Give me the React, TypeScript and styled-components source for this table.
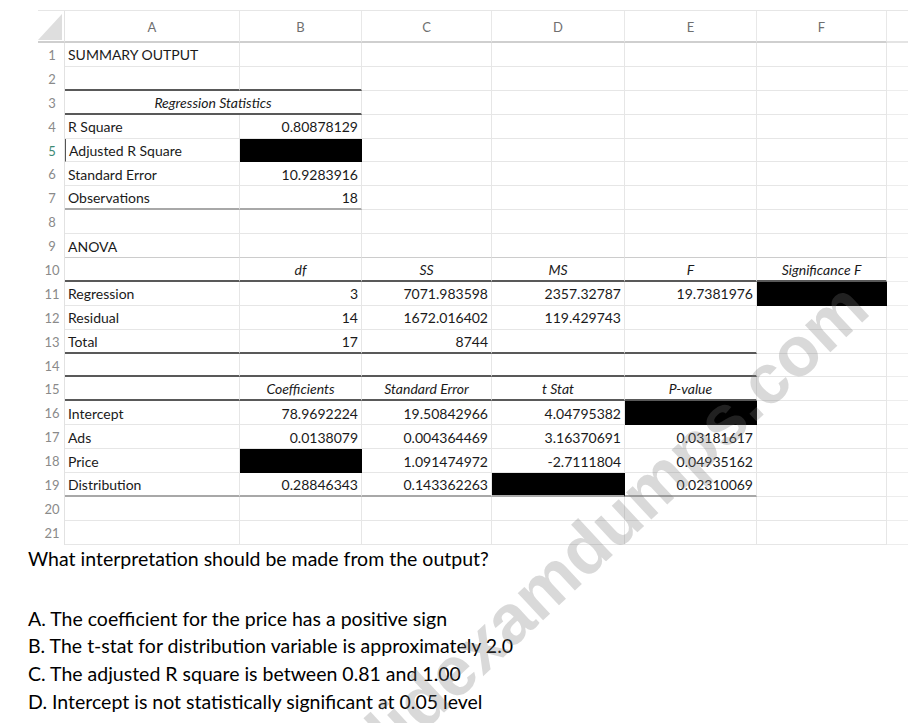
import React from 'react';
import styled, { createGlobalStyle } from 'styled-components';

type Align = 'left' | 'right' | 'center';
type Edge = 'dark' | 'mid' | 'soft';

interface CellData {
  t?: string;
  a?: Align;
  i?: boolean;
  span?: number;
  b?: Edge;
  black?: boolean;
  sel?: boolean;
}

const L = (t: string, b?: Edge): CellData => ({ t, a: 'left', b });
const R = (t: string, b?: Edge): CellData => ({ t, a: 'right', b });
const H = (t: string, b?: Edge): CellData => ({ t, a: 'center', i: true, b });
const E = (b?: Edge): CellData => ({ b });
const X = (b?: Edge): CellData => ({ black: true, b });

// columns A..F for each of the 21 rows
const rows: CellData[][] = [
  [L('SUMMARY OUTPUT'), E(), E(), E(), E(), E()],
  [E('dark'), E('dark'), E(), E(), E(), E()],
  [{ t: 'Regression Statistics', a: 'center', i: true, span: 2, b: 'dark' }, E(), E(), E(), E()],
  [L('R Square'), R('0.80878129'), E(), E(), E(), E()],
  [{ t: 'Adjusted R Square', a: 'left', sel: true }, X(), E(), E(), E(), E()],
  [L('Standard Error'), R('10.9283916'), E(), E(), E(), E()],
  [L('Observations', 'mid'), R('18', 'mid'), E(), E(), E(), E()],
  [E(), E(), E(), E(), E(), E()],
  [L('ANOVA', 'soft'), E('soft'), E('soft'), E('soft'), E('soft'), E('soft')],
  [E('dark'), H('df', 'dark'), H('SS', 'dark'), H('MS', 'dark'), H('F', 'dark'), H('Significance F', 'dark')],
  [L('Regression'), R('3'), R('7071.983598'), R('2357.32787'), R('19.7381976'), X()],
  [L('Residual'), R('14'), R('1672.016402'), R('119.429743'), E(), E()],
  [L('Total', 'dark'), R('17', 'dark'), R('8744', 'dark'), E('dark'), E('dark'), E()],
  [E('dark'), E('dark'), E('dark'), E('dark'), E('dark'), E()],
  [E('dark'), H('Coefficients', 'dark'), H('Standard Error', 'dark'), H('t Stat', 'dark'), H('P-value', 'dark'), E()],
  [L('Intercept'), R('78.9692224'), R('19.50842966'), R('4.04795382'), X(), E()],
  [L('Ads'), R('0.0138079'), R('0.004364469'), R('3.16370691'), R('0.03181617'), E()],
  [L('Price'), X(), R('1.091474972'), R('-2.7111804'), R('0.04935162'), E()],
  [L('Distribution', 'mid'), R('0.28846343', 'mid'), R('0.143362263', 'mid'), X('mid'), R('0.02310069', 'mid'), E()],
  [E(), E(), E(), E(), E(), E()],
  [E(), E(), E(), E(), E(), E()],
];

const letters = ['A', 'B', 'C', 'D', 'E', 'F'];

const options = [
  'A. The coefficient for the price has a positive sign',
  'B. The t-stat for distribution variable is approximately 2.0',
  'C. The adjusted R square is between 0.81 and 1.00',
  'D. Intercept is not statistically significant at 0.05 level',
];

const App: React.FC = () => {
  return (
    <Page>
      <GlobalStyle />
      <Sheet>
        <Corner>
          <CornerMark />
        </Corner>
        {letters.map((l) => (
          <ColHead key={l}>{l}</ColHead>
        ))}
        <ColHead $tail />
        {rows.map((row, r) => (
          <React.Fragment key={r}>
            <RowNum $sel={r === 4}>{r + 1}</RowNum>
            {row.map((c, k) => (
              <Cell
                key={k}
                $align={c.a}
                $italic={c.i}
                $span={c.span}
                $edge={c.b}
                $black={c.black}
                $sel={c.sel}
              >
                {c.t}
              </Cell>
            ))}
            <Tail />
          </React.Fragment>
        ))}
      </Sheet>

      <Question>What interpretation should be made from the output?</Question>
      <Options>
        {options.map((o) => (
          <li key={o}>{o}</li>
        ))}
      </Options>

      <Watermark aria-hidden="true">validexamdumps.com</Watermark>
    </Page>
  );
};

export default App;

const GlobalStyle = createGlobalStyle`
  html, body {
    margin: 0;
    padding: 0;
    background: #ffffff;
    overflow: hidden;
  }
`;

const Page = styled.div`
  position: relative;
  height: 723px;
  overflow: hidden;
  background: #fff;
  font-family: Lato, "Open Sans", sans-serif;
  color: #111;
`;

const Sheet = styled.div`
  display: grid;
  grid-template-columns: 27px 175px 122px 130px 133px 132px 130px 21px;
  grid-template-rows: 32px;
  grid-auto-rows: 23.9px;
  margin: 10px 0 0 38px;
  width: 870px;
  border-top: 1px solid #e6e6e6;
  font-size: 14px;
`;

const Corner = styled.div`
  position: relative;
  box-sizing: border-box;
  border-bottom: 2px solid #cfcfcf;
  border-right: 1px solid #e2e2e2;
`;

const CornerMark = styled.div`
  position: absolute;
  right: 2px;
  bottom: 1px;
  width: 24px;
  height: 26px;
  background: #dedede;
  clip-path: polygon(100% 0, 100% 100%, 0 100%);
`;

const ColHead = styled.div<{ $tail?: boolean }>`
  box-sizing: border-box;
  display: flex;
  align-items: center;
  justify-content: center;
  border-bottom: 2px solid ${(p) => (p.$tail ? '#e4e4e4' : '#cfcfcf')};
  border-right: ${(p) => (p.$tail ? 'none' : '1px solid #e8e8e8')};
  color: #6f6f6f;
  font-size: 13px;
  padding-top: 2px;
`;

const RowNum = styled.div<{ $sel?: boolean }>`
  box-sizing: border-box;
  display: flex;
  align-items: center;
  justify-content: center;
  border-right: 1px solid #e2e2e2;
  color: ${(p) => (p.$sel ? '#3e8a74' : '#8a8a8a')};
  font-size: 13px;
  padding-left: 2px;
`;

const edges: Record<Edge | 'grid', string> = {
  dark: '2px solid #595959',
  mid: '2px solid #a8a8a8',
  soft: '1px solid #cccccc',
  grid: '1px solid #e6e6e6',
};

const Cell = styled.div<{
  $align?: Align;
  $italic?: boolean;
  $span?: number;
  $edge?: Edge;
  $black?: boolean;
  $sel?: boolean;
}>`
  box-sizing: border-box;
  grid-column: span ${(p) => p.$span ?? 1};
  display: flex;
  align-items: center;
  justify-content: ${(p) =>
    p.$align === 'right' ? 'flex-end' : p.$align === 'center' ? 'center' : 'flex-start'};
  padding: 1px 3px 0 3px;
  white-space: nowrap;
  font-style: ${(p) => (p.$italic ? 'italic' : 'normal')};
  background: ${(p) => (p.$black ? '#000' : 'transparent')};
  border-right: 1px solid ${(p) => (p.$black ? '#000' : '#e6e6e6')};
  border-bottom: ${(p) => (p.$black && !p.$edge ? '1px solid #000' : edges[p.$edge ?? 'grid'])};
  border-left: ${(p) => (p.$sel ? '1px solid #555' : 'none')};
  color: #1a1a1a;
`;

const Tail = styled.div`
  border-bottom: 1px solid #ededed;
`;

const Question = styled.p`
  margin: 0 0 32px 28px;
  font-size: 19.5px;
  line-height: 28px;
  color: #000;
`;

const Options = styled.ul`
  list-style: none;
  margin: 0 0 0 28px;
  padding: 0;
  font-size: 19.5px;
  line-height: 27.7px;
  color: #000;
`;

const Watermark = styled.div`
  position: absolute;
  left: 345px;
  top: 750px;
  transform: rotate(-43deg);
  transform-origin: left bottom;
  font: bold 70px "Liberation Sans", Arial, sans-serif;
  line-height: 1;
  white-space: nowrap;
  color: rgba(120, 120, 120, 0.28);
  pointer-events: none;
`;
